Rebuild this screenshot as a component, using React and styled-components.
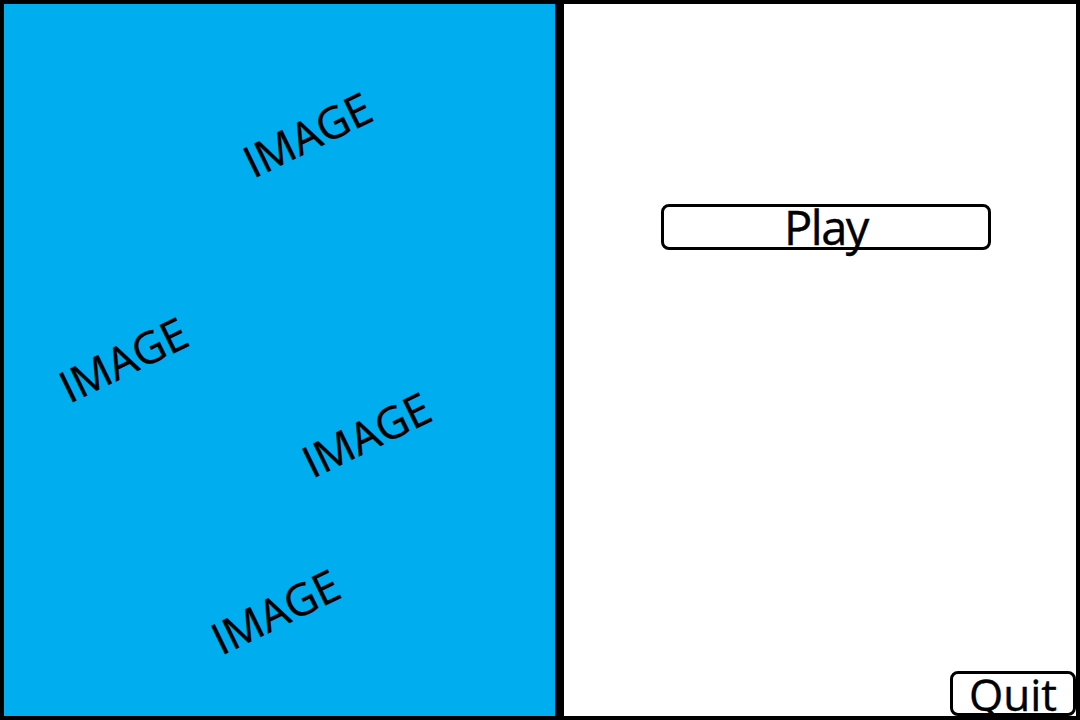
import styled, { createGlobalStyle } from 'styled-components';

const GlobalStyle = createGlobalStyle`
	html, body {
		margin: 0;
		padding: 0;
		background: #ffffff;
	}
	body {
		font-family: "Open Sans", "Liberation Sans", sans-serif;
	}
`;

const labels = [
	{ id: 1, x: 303, y: 130 },
	{ id: 2, x: 119, y: 355 },
	{ id: 3, x: 362, y: 430 },
	{ id: 4, x: 271, y: 607 },
];

const Frame = styled.div`
	box-sizing: border-box;
	width: 1080px;
	height: 720px;
	border: 4px solid #000;
	display: flex;
`;

const ImagePanel = styled.div`
	position: relative;
	width: 551px;
	flex: none;
	background: #00adef;
	border-right: 9px solid #000;
`;

const ImageLabel = styled.span`
	position: absolute;
	transform: translate(-50%, -50%) rotate(-26deg);
	font-size: 44px;
	color: #000;
	white-space: nowrap;
	line-height: 1;
	-webkit-text-stroke: 0.4px #000;
`;

const MenuPanel = styled.div`
	position: relative;
	flex: 1;
	display: flex;
	flex-direction: column;
	padding: 200px 0 0 97px;
	background: #fff;
`;

const MenuButton = styled.button`
	box-sizing: border-box;
	display: flex;
	align-items: center;
	justify-content: center;
	padding: 0;
	background: #fff;
	border: 3px solid #000;
	border-radius: 8px;
	font-family: "Open Sans", "Liberation Sans", sans-serif;
	color: #000;
	line-height: 0.9;
	cursor: pointer;
	-webkit-text-stroke: 0.4px #000;
`;

const PlayButton = styled(MenuButton)`
	width: 330px;
	height: 46px;
	font-size: 47px;
	letter-spacing: -1.5px;
	padding-top: 0;
`;

const QuitButton = styled(MenuButton)`
	position: absolute;
	right: 0;
	bottom: 0;
	width: 126px;
	height: 45px;
	font-size: 44px;
	padding-top: 2px;
`;

export default function App() {
	return (
		<>
			<GlobalStyle />
			<Frame>
				<ImagePanel>
					{labels.map(({ id, x, y }) => (
						<ImageLabel key={id} style={{ left: x, top: y }}>
							IMAGE
						</ImageLabel>
					))}
				</ImagePanel>
				<MenuPanel>
					<PlayButton>Play</PlayButton>
					<QuitButton>Quit</QuitButton>
				</MenuPanel>
			</Frame>
		</>
	);
}
